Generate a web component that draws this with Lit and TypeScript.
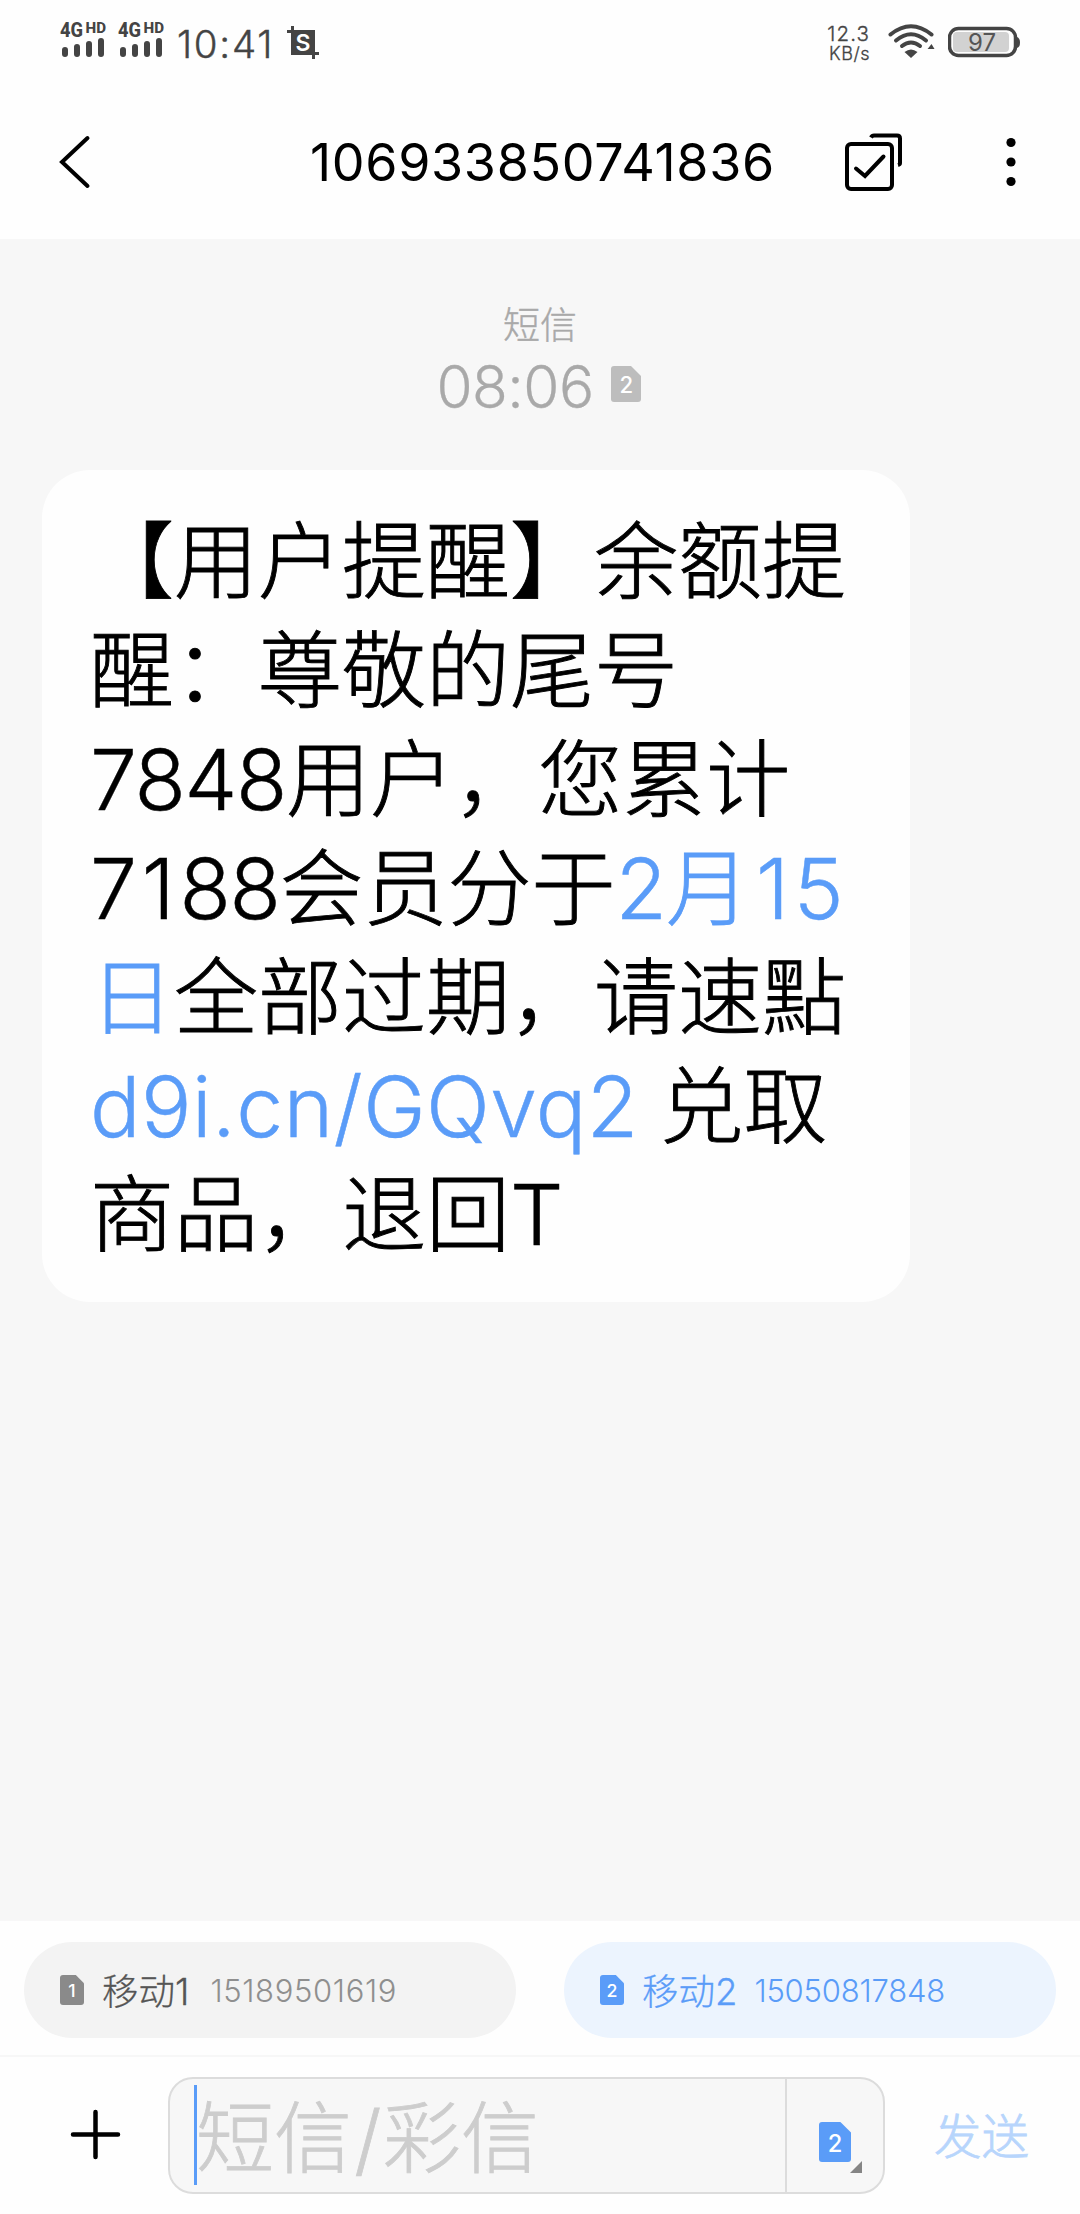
import { LitElement, html, css, svg } from "lit";
import { customElement, property } from "lit/decorators.js";

@customElement("sim-badge")
class SimBadge extends LitElement {
  @property() slotNo = "1";
  @property({ type: Number }) w = 24;
  @property({ type: Number }) h = 30;
  static styles = css`
    :host { display: block; line-height: 0; }
    .card { fill: currentColor; }
    .num { fill: #fff; font-family: Inter, "Liberation Sans", sans-serif; font-weight: 500; }
  `;
  render() {
    const { w, h } = this;
    const c = w * 0.3;
    return html`<svg width=${w} height=${h} viewBox="0 0 ${w} ${h}">
      ${svg`<path class="card" d="M3 0H${w - c - 1}L${w} ${c + 1}V${h - 3}Q${w} ${h} ${w - 3} ${h}H3Q0 ${h} 0 ${h - 3}V3Q0 0 3 0Z"/>
      <text class="num" x=${w / 2} y=${h * 0.5 + w * 0.3} text-anchor="middle" font-size=${w * 0.74}>${this.slotNo}</text>`}
    </svg>`;
  }
}

@customElement("app-root")
class AppRoot extends LitElement {
  static styles = css`
    :host {
      display: flex; flex-direction: column; width: 1080px; height: 2214px; background: #f7f7f7;
      font-family: Inter, "Noto Sans CJK SC", sans-serif; font-weight: 300; color: #000;
      text-spacing-trim: space-all; overflow: hidden; white-space: nowrap;
    }
    * { box-sizing: border-box; }
    svg { display: block; flex: none; }
    .top { height: 239px; background: #fefefe; display: flex; flex-direction: column; }
    .status { height: 85px; display: flex; align-items: flex-start; padding: 0 60px 0 59px; color: #444; }
    .signal { margin-top: 10px; width: 58px; }
    .tag { font: 800 20px Roboto, sans-serif; fill: #444; }
    .hd { font: 800 14px Roboto, sans-serif; fill: #444; }
    .bars { stroke: #444; stroke-width: 6; stroke-linecap: round; }
    .clock { margin: 20px 0 0 2px; width: 109px; font-size: 38.5px; line-height: 48px; letter-spacing: 1.7px; -webkit-text-stroke: .4px #444; }
    .shot { margin: 25px 0 0 1px; }
    .shot-s { font: 600 23px Inter, sans-serif; fill: #fff; }
    .spacer { flex: 1; }
    .speed { margin-top: 23px; width: 42px; display: flex; flex-direction: column; align-items: flex-end; -webkit-text-stroke: .3px #444; }
    .rate { font-size: 20.5px; line-height: 21px; letter-spacing: 1.1px; }
    .unit { font-size: 18px; line-height: 20px; letter-spacing: .5px; }
    .wifi { margin: 24px 0 0 18px; }
    .battery { margin: 26px 0 0 13px; }
    .pct { font: 400 24px Inter, sans-serif; fill: #555; }
    .nav { height: 154px; display: flex; align-items: center; padding: 0 0 0 58px; }
    .title { margin-left: 218px; width: 534px; padding-top: 1px; font-size: 52px; line-height: 64px; font-weight: 400; letter-spacing: .66px; }
    .more { margin-left: 101px; }
    .thread { flex: 1; display: flex; flex-direction: column; padding: 63px 42px 0; }
    .when { display: flex; flex-direction: column; align-items: center; color: #a9a9a9; }
    .kind { font-size: 37px; line-height: 48px; -webkit-text-stroke: .4px #a9a9a9; }
    .stamp { display: flex; align-items: center; gap: 17px; height: 76px; margin-right: 3px; margin-top: -1px; font-size: 58.5px; line-height: 76px; letter-spacing: -.5px; -webkit-text-stroke: .3px #a9a9a9; }
    .stamp sim-badge { color: #bdbdbd; margin-top: -6px; -webkit-text-stroke: 0; }
    .bubble {
      margin-top: 45px; width: 868px; height: 832px; background: #fefefe; border-radius: 48px;
      padding: 38px 48px 0; font-size: 84px; line-height: 108.9px; -webkit-text-stroke: .9px currentColor;
    }
    .n { letter-spacing: -1.3px; -webkit-text-stroke: .5px currentColor; }
    .one { padding: 0 6px; }
    .link { color: #5a9cf8; }
    .url { letter-spacing: .45px; word-spacing: -2px; -webkit-text-stroke: .5px currentColor; }
    .after { word-spacing: -3px; }
    .sims { height: 136px; background: #fefefe; border-bottom: 2px solid #f7f7f7; display: flex; justify-content: space-between; padding: 21px 24px 0; }
    .sim { width: 492px; height: 96px; border-radius: 48px; background: #f3f3f3; display: flex; align-items: center; padding-left: 36px; color: #8a8a8a; }
    .sim.on { background: #ecf4fe; color: #5a9cf8; }
    .sim sim-badge { margin-right: 18px; }
    .label { padding-top: 4px; font-size: 36.5px; line-height: 48px; color: #555; -webkit-text-stroke: .3px currentColor; }
    .on .label { color: #5a9cf8; }
    .phone { padding-top: 2px; margin-left: 21px; font-size: 31px; line-height: 40px; letter-spacing: .65px; color: #8f8f8f; }
    .on .phone { margin-left: 17px; letter-spacing: -.2px; color: #5a9cf8; }
    .composer { height: 157px; background: #fefefe; display: flex; align-items: flex-start; padding-top: 20px; }
    .plus { margin: 32px 47px 0 70px; }
    .field { width: 717px; height: 117px; border: 2px solid #dcdcdc; border-radius: 25px; background: #f7f7f7; display: flex; }
    .input { width: 615px; padding: 6px 0 0 24px; display: flex; }
    .caret { width: 3px; height: 100px; background: #5a9cf8; }
    .hint { margin: 2px 0 0 -1px; font-size: 78px; line-height: 104px; color: #cdcdcd; -webkit-text-stroke: .8px #cdcdcd; }
    .slash { padding: 0 1.5px 0 2.3px; }
    .pick { width: 98px; border-left: 2px solid #dcdcdc; display: flex; padding: 43px 0 0 32px; color: #5a9cf8; }
    .corner { margin-top: 39px; margin-left: -1px; }
    .send { margin-left: 49px; margin-top: 28px; font-size: 47.5px; line-height: 64px; color: #b7d5fc; -webkit-text-stroke: .8px #b7d5fc; }
  `;

  signal() {
    return html`<svg class="signal" width="58" height="54" viewBox="-1 -10 58 54">
      <text class="tag" x="0" y="17" textLength="23" lengthAdjust="spacingAndGlyphs">4G</text>
      <text class="hd" x="25.500" y="12.500" textLength="20.500" lengthAdjust="spacingAndGlyphs">HD</text>
      <path class="bars" d="M5 30V34M17 27V34M29 24V34M41 21V34"/>
    </svg>`;
  }

  render() {
    return html`
      <header class="top">
        <div class="status">
          ${this.signal()}${this.signal()}
          <span class="clock">10:41</span>
          <svg class="shot" width="34" height="35" viewBox="0 0 34 35">
            <path d="M4 5H28V29H4Z" fill="#444"/>
            <path d="M0 6.500H26.500V34M5.500 1V28.500H32" fill="none" stroke="#444" stroke-width="3"/>
            <text class="shot-s" x="16" y="25.500" text-anchor="middle">S</text>
          </svg>
          <span class="spacer"></span>
          <div class="speed"><span class="rate">12.3</span><span class="unit">KB/s</span></div>
          <svg class="wifi" width="47" height="36" viewBox="0 0 47 36">
            <g fill="none" stroke="#444" stroke-width="4" stroke-linecap="round">
              <path d="M2.500 10.500Q23 -6 43.500 10.500"/><path d="M8 16.500Q23 4 38 16.500"/><path d="M14 22Q23 15 32 22"/>
            </g>
            <path d="M16.500 28Q23 23 29.500 28L23 34Z" fill="#444"/>
            <path d="M40 24.500L43.500 20L46.500 25H39.500Z" fill="#444"/>
          </svg>
          <svg class="battery" width="72" height="32" viewBox="0 0 72 32">
            <rect x="1.500" y="2.500" width="66" height="27" rx="9" fill="#fefefe" stroke="#444" stroke-width="3.500"/>
            <rect x="5" y="6" width="56" height="20" rx="4" fill="#d2d2d2"/>
            <path d="M69 11Q72 12 72 16.500T69 22Z" fill="#444"/>
            <text class="pct" x="34" y="25" text-anchor="middle">97</text>
          </svg>
        </div>
        <div class="nav">
          <svg width="34" height="54" viewBox="0 0 34 54"><path d="M29.500 3L4 27L29.500 51" fill="none" stroke="#000" stroke-width="4" stroke-linecap="round"/></svg>
          <span class="title">106933850741836</span>
          <svg width="60" height="60" viewBox="0 0 60 60" fill="none" stroke="#000" stroke-width="4">
            <rect x="3" y="12" width="45" height="45" rx="4"/>
            <path d="M27 5.500Q28 3.500 30 3.500H53Q56 3.500 56 6.500V31Q56 32.500 54 33"/>
            <path d="M12 36.500L21 44L39.500 24.500" stroke-linecap="round"/>
          </svg>
          <svg class="more" width="12" height="52" viewBox="0 0 12 52"><circle cx="6" cy="6.500" r="4.600"/><circle cx="6" cy="26" r="4.600"/><circle cx="6" cy="45.500" r="4.600"/></svg>
        </div>
      </header>

      <main class="thread">
        <div class="when">
          <span class="kind">短信</span>
          <div class="stamp"><span>08:06</span><sim-badge slotNo="2" w="30" h="36"></sim-badge></div>
        </div>
        <div class="bubble">
          <div>【用户提醒】余额提</div>
          <div>醒：尊敬的尾号</div>
          <div><span class="n">7848</span>用户，您累计</div>
          <div><span class="n">7<span class="one">1</span>88</span>会员分于<span class="link"><span class="n">2</span>月<span class="n"><span class="one">1</span>5</span></span></div>
          <div><span class="link">日</span>全部过期，请速點</div>
          <div class="after"><span class="link url">d9i.cn/GQvq2</span> 兑取</div>
          <div>商品，退回<span class="n">T</span></div>
        </div>
      </main>

      <section class="sims">
        <div class="sim"><sim-badge slotNo="1"></sim-badge><span class="label">移动1</span><span class="phone">15189501619</span></div>
        <div class="sim on"><sim-badge slotNo="2"></sim-badge><span class="label">移动2</span><span class="phone">15050817848</span></div>
      </section>

      <footer class="composer">
        <svg class="plus" width="51" height="51" viewBox="0 0 51 51"><path d="M3 25.500H48M25.500 3V48" stroke="#000" stroke-width="4.500" stroke-linecap="round"/></svg>
        <div class="field">
          <div class="input"><span class="caret"></span><span class="hint">短信<span class="slash">/</span>彩信</span></div>
          <div class="pick">
            <sim-badge slotNo="2" w="32" h="40"></sim-badge>
            <svg class="corner" width="12" height="12" viewBox="0 0 12 12"><path d="M0 12L12 0V12Z" fill="#858585"/></svg>
          </div>
        </div>
        <span class="send">发送</span>
      </footer>
    `;
  }
}
